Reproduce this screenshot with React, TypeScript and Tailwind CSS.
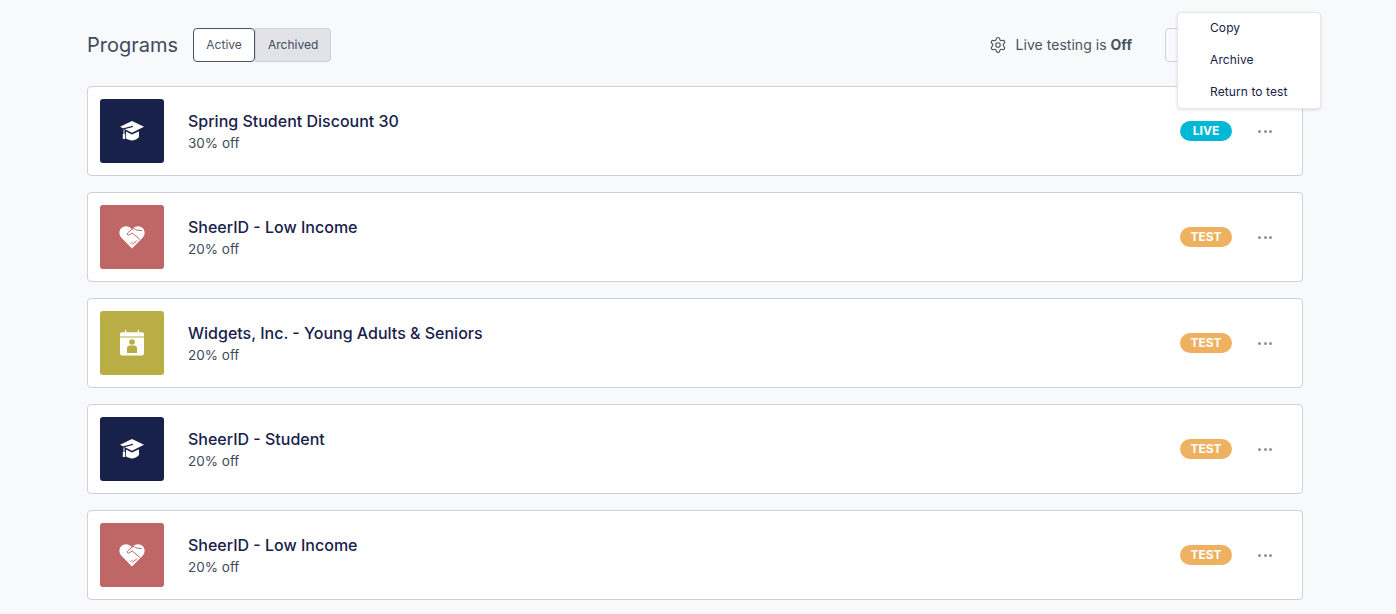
import { Settings } from "lucide-react";

type Kind = "student" | "income" | "senior";

const programs: { name: string; off: string; kind: Kind; status: "LIVE" | "TEST" }[] = [
    { name: "Spring Student Discount 30", off: "30% off", kind: "student", status: "LIVE" },
    { name: "SheerID - Low Income", off: "20% off", kind: "income", status: "TEST" },
    { name: "Widgets, Inc. - Young Adults & Seniors", off: "20% off", kind: "senior", status: "TEST" },
    { name: "SheerID - Student", off: "20% off", kind: "student", status: "TEST" },
    { name: "SheerID - Low Income", off: "20% off", kind: "income", status: "TEST" },
];

function StudentIcon() {
    return (
        <svg width="26" height="22" viewBox="0 0 26 22" fill="none">
            <path d="M13 1 L25 6.8 L13 12.8 L1 6.8 Z" fill="#fff" />
            <path d="M7 11.6 L13 14.6 L20 11.2 V17 C18 19.4 15.6 20.4 13 20.4 C11 20.4 9 19.8 7 18.6 Z" fill="#fff" />
            <path d="M14 6.4 L5 8.6 V14" stroke="#18214a" strokeWidth="1.1" />
            <path d="M5 9.5 V14" stroke="#fff" strokeWidth="1" />
            <rect x="3.8" y="14" width="2.4" height="5" fill="#fff" />
        </svg>
    );
}

function IncomeIcon() {
    return (
        <svg width="26" height="24" viewBox="0 0 26 24" fill="none">
            <path d="M13 23.4 L2.4 12.8 C-0.8 9.4 0 4.2 3.4 2.2 C6.8 0.4 10.4 1.2 13 4.2 C15.6 1.2 19.2 0.4 22.6 2.2 C26 4.2 26.8 9.4 23.6 12.8 Z" fill="#fff" />
            <path d="M13.4 3.8 L8.4 8.2 C7.6 9.4 8.8 10.6 10 10 L13.2 8 L20.6 14.2" stroke="#bf6666" strokeWidth="1" strokeLinecap="round" strokeLinejoin="round" />
            <path d="M13.4 3.8 C15 3.2 16.4 4 17.4 5 L22.5 5.6" stroke="#bf6666" strokeWidth="1" strokeLinecap="round" />
            <path d="M11.8 18.6 L13.4 17 M13.8 19.4 L15.8 17.4 M15.8 17.6 L17.8 15.6" stroke="#bf6666" strokeWidth="1" strokeLinecap="round" />
        </svg>
    );
}

function SeniorIcon() {
    return (
        <svg width="26" height="26" viewBox="0 0 26 26" fill="none">
            <path d="M1 4.4 C1 3.1 2 2.2 3.2 2.2 H22.8 C24 2.2 25 3.1 25 4.4 V6.6 H1 Z" fill="#fff" />
            <path d="M1 7.6 H25 V23.4 C25 24.5 24.1 25.4 23 25.4 H3 C1.9 25.4 1 24.5 1 23.4 Z" fill="#fff" />
            <path d="M6.6 0.2 V4 M19.4 0.2 V4" stroke="#fff" strokeWidth="1.2" strokeLinecap="round" />
            <circle cx="13" cy="12" r="2.8" fill="#b9ad45" />
            <path d="M8 23 V18 C8 16.4 9 15.4 10.6 15.4 H15.4 C17 15.4 18 16.4 18 18 V23 Z" fill="#b9ad45" />
        </svg>
    );
}

function ProgramRow({ program }: { program: (typeof programs)[number] }) {
    const thumb =
        program.kind === "student" ? "bg-[#18214a]" : program.kind === "income" ? "bg-[#bf6666]" : "bg-[#b9ad45]";

    return (
        <div className="flex h-[90px] items-center rounded border border-[#cdd0d9] bg-white pl-3 pr-[30px]">
            <div className={`flex size-16 shrink-0 items-center justify-center rounded-[3px] ${thumb}`}>
                {program.kind === "student" && <StudentIcon />}
                {program.kind === "income" && <IncomeIcon />}
                {program.kind === "senior" && <SeniorIcon />}
            </div>
            <div className="ml-6 flex-1">
                <div className="text-[16px] leading-[22px] font-medium text-[#18214a]">{program.name}</div>
                <div className="mt-px text-[13.5px] leading-[20px] text-[#414a5a]">{program.off}</div>
            </div>
            <span
                className={`flex h-5 w-[52px] items-center justify-center rounded-full text-[12px] font-bold text-white ${
                    program.status === "LIVE" ? "bg-[#00b8d4]" : "bg-[#eeb15f]"
                }`}
            >
                {program.status}
            </span>
            <div className="ml-[26px] flex gap-[2.5px]">
                <span className="size-[3px] rounded-full bg-[#8b92a3]" />
                <span className="size-[3px] rounded-full bg-[#8b92a3]" />
                <span className="size-[3px] rounded-full bg-[#8b92a3]" />
            </div>
        </div>
    );
}

export default function App() {
    return (
        <div className="min-h-[614px] bg-[#f8f9fb] pt-7 font-['Inter',sans-serif]">
            <div className="relative ml-[87px] w-[1216px]">
                <div className="flex h-[34px] items-center">
                    <h1 className="text-[20px] font-normal text-[#414a5a]">Programs</h1>
                    <div className="ml-[15px] flex">
                        <button className="h-[34px] w-[62px] rounded border border-[#4a5262] bg-white text-[12px] text-[#4a5262]">
                            Active
                        </button>
                        <button className="h-[34px] w-[76px] rounded-r border border-[#cdd0d9] bg-[#e1e3e8] text-[12px] text-[#414a5a]">
                            Archived
                        </button>
                    </div>
                    <div className="ml-auto flex items-center text-[14px] text-[#4a5262]">
                        <Settings size={18} strokeWidth={1.5} />
                        <span className="mb-px ml-[9px] tracking-[0.03px]">
                            Live testing is <b className="font-bold">Off</b>
                        </span>
                    </div>
                    <div className="ml-[33px] h-[34px] w-[138px] rounded border border-[#cdd0d9]" />
                </div>
                <div className="mt-6 flex flex-col gap-4">
                    {programs.map((program, i) => (
                        <ProgramRow key={i} program={program} />
                    ))}
                </div>
                <div className="absolute top-[-16.5px] left-[1090px] h-[97px] w-[144px] rounded border border-[#e6e8ed] bg-white pl-[32px] text-[12px] tracking-[0.1px] text-[#18214a] shadow-[0_1px_3px_rgba(24,33,74,0.14)]">
                    <div className="-mt-px flex flex-col">
                        <div className="flex h-[32px] items-center">Copy</div>
                        <div className="flex h-[32px] items-center">Archive</div>
                        <div className="flex h-[32px] items-center">Return to test</div>
                    </div>
                </div>
            </div>
        </div>
    );
}
